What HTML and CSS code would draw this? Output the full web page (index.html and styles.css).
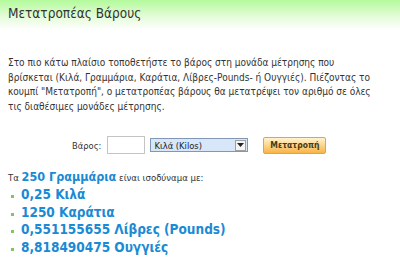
FILE: index.html
```html
<!DOCTYPE html>
<html lang="el">
<head>
  <meta charset="UTF-8">
  <title>Μετατροπέας Βάρους</title>
  <link rel="stylesheet" href="styles.css">
</head>
<body>

  <header class="title-bar">
    <h1>Μετατροπέας Βάρους</h1>
  </header>

  <section class="converter">
    <p class="intro">Στο πιο κάτω πλαίσιο τοποθετήστε το βάρος στη μονάδα μέτρησης που<br>
      βρίσκεται (Κιλά, Γραμμάρια, Καράτια, Λίβρες-Pounds- ή Ουγγιές). Πιέζοντας το κουμπί "Μετατροπή", ο μετατροπέας βάρους θα μετατρέψει τον αριθμό σε όλες<br>
      τις διαθέσιμες μονάδες μέτρησης.</p>

    <form class="convert-form">
      <label for="weight">Βάρος:</label>
      <input type="text" id="weight" class="weight-input">
      <div class="unit-select">
        <span class="unit-value">Κιλά (Kilos)</span>
        <span class="unit-arrow">
          <svg width="7" height="4" viewBox="0 0 7 4"><path d="M0 0h7L3.5 4z" fill="#222"/></svg>
        </span>
      </div>
      <button type="button" class="convert-btn">Μετατροπή</button>
    </form>

    <p class="result-head">Τα <strong>250 Γραμμάρια</strong> είναι ισοδύναμα με:</p>
    <ul class="results">
      <li>0,25 Κιλά</li>
      <li>1250 Καράτια</li>
      <li>0,551155655 Λίβρες (Pounds)</li>
      <li>8,818490475 Ουγγιές</li>
    </ul>
  </section>

</body>
</html>
```

FILE: styles.css
```css
body {
  margin: 0;
  font-family: "DejaVu Sans Condensed", "DejaVu Sans", sans-serif;
  color: #333;
  background: #fff;
}

.title-bar {
  background: linear-gradient(to bottom, #b3fa9b 0%, #e4fcd9 55%, #fff 100%);
  height: 30px;
  padding: 0 8px;
}

.title-bar h1 {
  margin: 0;
  padding-top: 5px;
  font-size: 13.5px;
  font-weight: normal;
  color: #333;
}

.converter {
  padding: 0 8px;
}

.intro {
  margin: 26px 0 0;
  font-size: 10px;
  line-height: 14.5px;
}

.convert-form {
  display: flex;
  align-items: center;
  height: 18px;
  margin: 22px 0 0 64px;
  font-size: 9.3px;
}

.convert-form label {
  margin-right: 6px;
}

.weight-input {
  box-sizing: border-box;
  width: 38px;
  height: 18px;
  padding: 0 2px;
  border: 1px solid #c4c4c4;
  margin: 0 5px 0 0;
}

.unit-select {
  box-sizing: border-box;
  display: flex;
  align-items: center;
  width: 98px;
  height: 14px;
  border: 1px solid #8297b3;
  background: #d7e6f8;
  color: #222;
}

.unit-value {
  flex: 1;
  padding-left: 3px;
  white-space: nowrap;
}

.unit-arrow {
  display: flex;
  align-items: center;
  justify-content: center;
  width: 9px;
  height: 9px;
  border: 1px solid #a0a0a0;
  background: #f4f4f4;
  margin-right: 1px;
}

.convert-btn {
  margin-left: 15px;
  width: 63px;
  height: 17px;
  border: 1px solid #e3a63c;
  border-radius: 2px;
  background: linear-gradient(to bottom, #fff4d0, #f8b445);
  font-family: inherit;
  font-size: 8.5px;
  font-weight: bold;
  color: #4a3a10;
  padding: 0;
}

.result-head {
  margin: 14px 0 0;
  font-size: 9.5px;
  line-height: 17px;
}

.result-head strong {
  font-size: 12.5px;
  color: #1a8ad4;
}

.results {
  list-style: none;
  margin: 0;
  padding: 0;
}

.results li {
  position: relative;
  padding-left: 13px;
  font-size: 13.5px;
  font-weight: bold;
  line-height: 17.5px;
  color: #1a8ad4;
}

.results li::before {
  content: "";
  position: absolute;
  left: 3px;
  top: 9px;
  width: 3px;
  height: 3px;
  background: #7cc95a;
}
```
